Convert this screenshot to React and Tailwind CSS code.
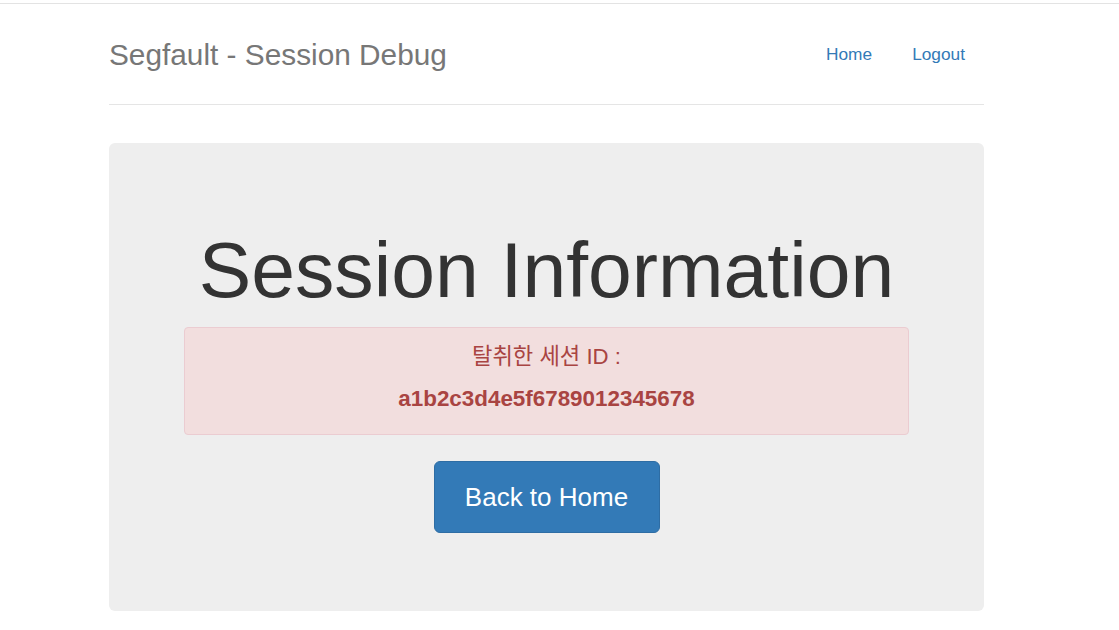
import React from "react";

export default function App() {
  const sans = { fontFamily: '"Liberation Sans", Arial, sans-serif' };
  return (
    <div className="min-h-[630px] bg-white pt-[3px]" style={sans}>
      <div className="border-t border-[#e3e3e3]" />
      <div className="ml-[109px] w-[875px]">
        <div className="flex h-[101px] items-center justify-between border-b border-[#e5e5e5] pt-[1px]">
          <h3 className="text-[29.8px] leading-none text-[#777777] font-normal">
            Segfault - Session Debug
          </h3>
          <nav className="flex items-center pr-[19px]">
            <a className="px-[20px] text-[17.3px] leading-none text-[#337ab7]" href="#">
              Home
            </a>
            <a className="pl-[20px] text-[17.3px] leading-none text-[#337ab7]" href="#">
              Logout
            </a>
          </nav>
        </div>

        <div className="mt-[38px] flex h-[468px] flex-col items-center rounded-[6px] bg-[#eeeeee] px-[75px] pt-[88px]">
          <h1 className="h-[78px] text-[78.7px] leading-[78px] text-[#333333] font-normal">
            Session Information
          </h1>
          <div className="mt-[18px] flex h-[108px] w-[725px] flex-col items-center rounded-[4px] border border-[#ebccd1] bg-[#f2dede] pt-[14px] text-[#a94442]">
            <p
              className="h-[30px] text-[22.2px] leading-[30px]"
              style={{ fontFamily: '"Liberation Sans", "Noto Sans CJK KR", sans-serif' }}
            >
              탈취한 세션 ID :
            </p>
            <p className="mt-[12px] h-[30px] text-[22.4px] font-bold leading-[30px]">
              a1b2c3d4e5f6789012345678
            </p>
          </div>
          <button className="mt-[26px] flex h-[72px] w-[226px] items-center justify-center rounded-[6px] border border-[#2e6da4] bg-[#337ab7] text-[26px] leading-none text-white">
            Back to Home
          </button>
        </div>
      </div>
    </div>
  );
}
